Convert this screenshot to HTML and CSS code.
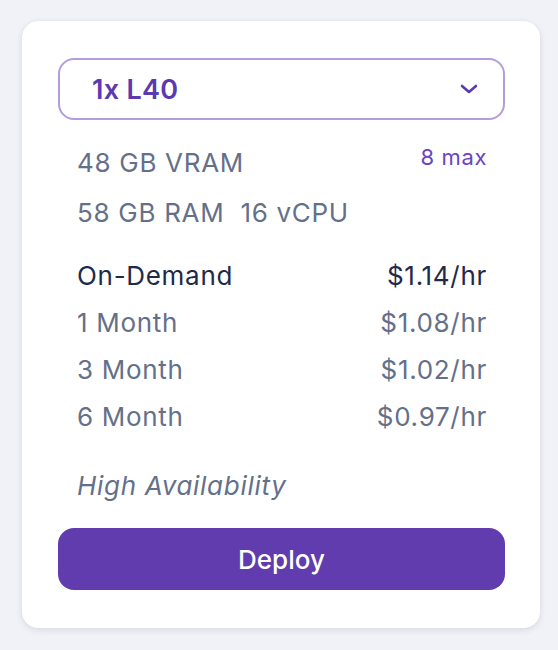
FILE: index.html
```html
<!DOCTYPE html>
<html>
<head>
<meta charset="utf-8">
<link rel="stylesheet" href="styles.css">
</head>
<body>
<div class="card">
  <div class="select">
    <span class="select-label">1x L40</span>
    <svg class="chevron" width="18" height="10" viewBox="0 0 18 10"><path d="M2 2 L9 8 L16 2" fill="none" stroke="#5b3ab0" stroke-width="2.6" stroke-linecap="round" stroke-linejoin="round"/></svg>
  </div>
  <div class="details">
    <div class="specs">
      <div class="spec-row"><span>48 GB VRAM</span><span class="max">8 max</span></div>
      <div class="spec-row"><span>58 GB RAM&nbsp; 16 vCPU</span></div>
    </div>
    <div class="prices">
      <div class="price-row primary"><span>On-Demand</span><span>$1.14/hr</span></div>
      <div class="price-row"><span>1 Month</span><span>$1.08/hr</span></div>
      <div class="price-row"><span>3 Month</span><span>$1.02/hr</span></div>
      <div class="price-row"><span>6 Month</span><span>$0.97/hr</span></div>
    </div>
    <div class="availability">High Availability</div>
  </div>
  <button class="deploy">Deploy</button>
</div>
</body>
</html>
```
FILE: styles.css
```css
html, body {
  margin: 0;
  padding: 0;
}
body {
  background: #f1f2f7;
  font-family: Inter, "Noto Sans", sans-serif;
  width: 558px;
  height: 650px;
  padding: 21px 0 0 22px;
  box-sizing: border-box;
}
.card {
  width: 518px;
  height: 607px;
  box-sizing: border-box;
  background: #ffffff;
  border-radius: 16px;
  box-shadow: 0 2px 6px rgba(40, 45, 90, 0.12), 0 0 1px rgba(40, 45, 90, 0.1);
  padding: 37px 35px 0 36px;
  display: flex;
  flex-direction: column;
}
.select {
  height: 62px;
  box-sizing: border-box;
  border: 2px solid #b39ddb;
  border-radius: 16px;
  display: flex;
  align-items: center;
  justify-content: space-between;
  padding: 0 25px 0 32px;
}
.select-label {
  color: #5b3ab0;
  font-size: 27px;
  font-weight: 600;
  letter-spacing: 0.3px;
}
.chevron {
  display: block;
}
.details {
  padding: 0 18px 0 19px;
  color: #64708a;
  font-size: 26px;
  letter-spacing: 0.7px;
}
.specs {
  margin-top: 18px;
}
.spec-row {
  display: flex;
  justify-content: space-between;
  align-items: flex-start;
  line-height: 50px;
}
.max {
  color: #6a45c0;
  font-size: 22px;
  line-height: 38px;
  letter-spacing: 0.6px;
}
.prices {
  margin-top: 14px;
}
.price-row {
  display: flex;
  justify-content: space-between;
  line-height: 47px;
}
.price-row.primary {
  color: #1f2a48;
}
.availability {
  margin-top: 22px;
  line-height: 48px;
  font-style: italic;
}
.deploy {
  margin-top: 18px;
  height: 62px;
  border: none;
  border-radius: 16px;
  background: #603cae;
  color: #ffffff;
  font-family: Inter, "Noto Sans", sans-serif;
  font-size: 26px;
  font-weight: 500;
}
```
